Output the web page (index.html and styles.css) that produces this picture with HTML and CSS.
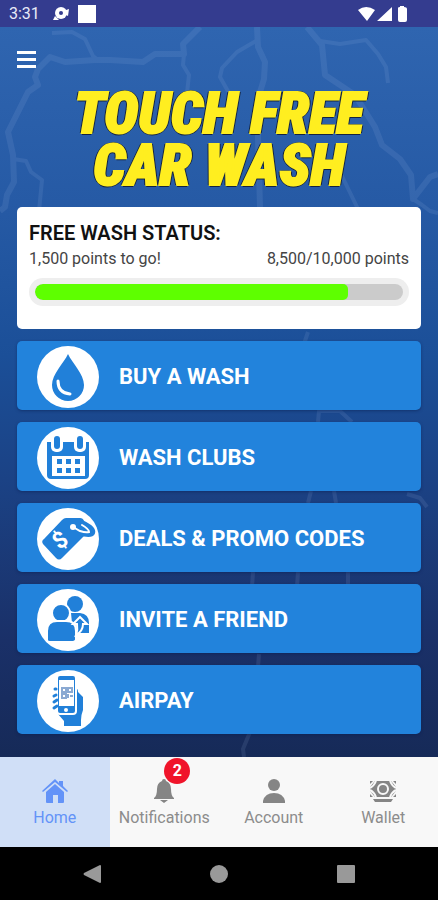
FILE: index.html
```html
<!DOCTYPE html>
<html lang="en">
<head>
<meta charset="utf-8">
<meta name="viewport" content="width=device-width, initial-scale=1">
<title>Touch Free Car Wash</title>
<link rel="stylesheet" href="styles.css">
</head>
<body>
<div class="status-bar">
  <time class="clock">3:31</time>
  <svg class="status-left" width="44" height="20" viewBox="0 0 44 20" aria-hidden="true">
    <circle cx="9" cy="9" r="6"/><path d="M1 16l2-4 4 4zM14 6l3-1-1 7-2-1z"/><circle class="hole" cx="9" cy="9" r="2"/>
    <rect x="26" y="1" width="18" height="18"/>
  </svg>
  <svg class="status-right" width="50" height="18" viewBox="0 0 50 18" aria-hidden="true">
    <path d="M0 5Q8-1 17 5L9 16zM34 2v14H19zM40 3q0-1 2-1V1h4v1q3 0 3 2v11q0 2-2 2h-5q-2 0-2-2z"/>
  </svg>
</div>

<main class="screen">
  <svg class="lightning" viewBox="0 0 438 730" preserveAspectRatio="xMidYMin slice" aria-hidden="true">
    <g class="bolt-wide">
      <path d="M200 0L183 17L184 27L155 27L143 35L110 33L95 33L65 35L50 30L38 42L35 50L38 58L28 65L8 105L13 128L14 155L7 168L5 180L0 184"/>
      <path d="M257 0L258 20L265 35L264 52L257 75L260 180"/>
      <path d="M307 0L322 18L325 48L355 68L375 100L382 118L400 132L411 148L413 172L430 150L438 147"/>
    </g>
    <g class="bolt">
      <path d="M52 6L72 5L85 12L93 29L98 33"/>
      <path d="M184 27L183 38L189 48L187 66"/>
      <path d="M256 14L237 25L222 41L220 50L229 66"/>
      <path d="M320 14L340 17L366 13L378 27L386 40L388 56"/>
      <path d="M13 132L26 134L31 145L42 153L39 184"/>
      <path d="M413 172L422 178L430 184L438 186"/>
      <path d="M340 145L358 182M308 305L303 320M318 395L319 384L340 384L352 395"/>
      <path d="M311 464L308 476M334 464L336 476M298 545L297 560M253 545L252 560M348 545L348 560M259 627L258 640M250 705L243 722L244 730"/>
      <path d="M407 467L420 471L427 480"/>
    </g>
  </svg>

  <header class="top">
    <button class="menu" type="button" aria-label="Open menu"><span></span><span></span><span></span></button>
    <h1 class="logo">TOUCH FREE<br>CAR WASH</h1>
  </header>

  <section class="card">
    <h2>FREE WASH STATUS:</h2>
    <div class="points"><label for="points">1,500 points to go!</label><span>8,500/10,000 points</span></div>
    <progress id="points" max="10000" value="8500"></progress>
  </section>

  <div class="actions">
    <button class="action" type="button">
      <svg viewBox="0 0 62 62" aria-hidden="true"><circle class="disc" cx="31" cy="31" r="31"/>
        <path d="M31 8C27 17 15 28 15 39a16 16 0 0 0 32 0C47 28 35 17 31 8z"/>
        <path class="line w3" d="M21 35Q21 47 33 48"/></svg>
      BUY A WASH
    </button>
    <button class="action" type="button">
      <svg viewBox="0 0 62 62" aria-hidden="true"><circle class="disc" cx="31" cy="31" r="31"/>
        <path d="M10 15H52V48Q52 52 48 52H14Q10 52 10 48z"/>
        <rect class="disc" x="14" y="8" width="12" height="17" rx="5"/><rect class="disc" x="37" y="8" width="12" height="17" rx="5"/>
        <rect x="17" y="9" width="6" height="13" rx="3"/><rect x="40" y="9" width="6" height="13" rx="3"/>
        <rect class="disc" x="15" y="29" width="33" height="20"/>
        <path d="M20 32h5v5h-5zM29 32h5v5h-5zM38 32h5v5h-5zM20 41h5v5h-5zM29 41h5v5h-5zM38 41h5v5h-5z"/></svg>
      WASH CLUBS
    </button>
    <button class="action" type="button">
      <svg viewBox="0 0 62 62" aria-hidden="true"><circle class="disc" cx="31" cy="31" r="31"/>
        <path d="M29 10H43Q46 10 47 13L48 27L25 50Q22 53 19 50L6 36Q4 33 7 31L25 12Q27 10 29 10z"/>
        <path class="loop" d="M45 14Q58 20 56 25Q54 29 42 25"/>
        <circle class="disc" cx="36" cy="19" r="3"/><path class="line w2" d="M36 19L43 23Q49 25 52 24Q52 21 45 17"/>
        <text class="dollar" x="23" y="40" transform="rotate(-36 23 32)">$</text></svg>
      DEALS &amp; PROMO CODES
    </button>
    <button class="action" type="button">
      <svg viewBox="0 0 62 62" aria-hidden="true"><circle class="disc" cx="31" cy="31" r="31"/>
        <circle cx="38" cy="15" r="8"/><path d="M34 24H43Q52 25 52 34V44H36z"/>
        <circle class="ring" cx="24" cy="24" r="9"/>
        <path class="ring" d="M10 51V42Q10 32 20 32H29Q39 32 39 42V51Q38 53 36 53H13Q10 53 10 51z"/>
        <path class="ring" d="M43 28L50 35H46Q46 42 39 46Q41 41 40 35H36z"/></svg>
      INVITE A FRIEND
    </button>
    <button class="action" type="button">
      <svg viewBox="0 0 62 62" aria-hidden="true"><circle class="disc" cx="31" cy="31" r="31"/>
        <path d="M38 18Q41 18 41 22L46 27V40Q44 45 44 50V56H27V51L21 44H35Q39 43 38 38z"/>
        <rect class="ring" x="20" y="5" width="19" height="39" rx="3"/>
        <rect class="disc" x="22" y="10" width="15" height="26"/><circle class="disc" cx="29" cy="40" r="2"/>
        <path class="qr" d="M25 18h4v4h-4zM31 18h4v4h-4zM25 24h4v4h-4zM31 24v4M33 26h3"/>
        <path class="finger" d="M18 19h1M17 26l2-1M17 32l3-2M17 38l3-2"/></svg>
      AIRPAY
    </button>
  </div>
</main>

<nav class="tabs" aria-label="Main">
  <a class="tab active" href="#home" aria-current="page">
    <svg viewBox="0 0 24 24" aria-hidden="true"><path d="M12 0L16 4V2H20V7L25 12L24 13L12 3L0 13L-1 12zM12 5L21 13V23Q21 24 20 24H15V16H10V24H4Q3 24 3 23V13z"/></svg>
    Home
  </a>
  <a class="tab" href="#notifications">
    <span class="icon-wrap">
      <svg viewBox="0 0 24 24" aria-hidden="true"><path d="M12 0Q14 0 14 2Q19 4 19 10Q19 17 22 19V20H2V19Q5 17 5 10Q5 4 10 2Q10 0 12 0zM8 21H16L12 24z"/></svg>
      <span class="badge">2</span>
    </span>
    Notifications
  </a>
  <a class="tab" href="#account">
    <svg viewBox="0 0 24 24" aria-hidden="true"><circle cx="12" cy="6" r="6"/><path d="M1 24V22Q3 14 12 14Q21 14 23 22V24z"/></svg>
    Account
  </a>
  <a class="tab" href="#wallet">
    <svg viewBox="0 0 24 24" aria-hidden="true"><path d="M4 2H20L25 8V12L20 18H4L-1 12V8z"/><path class="cut" d="M5 2Q3 7-1 9M19 2Q21 7 25 9M5 18Q3 13-1 11M19 18Q21 13 25 11"/><path d="M-1 2H2L-1 5zM25 2H22L25 5zM-1 18H2L-1 15zM25 18H22L25 15zM2 20H22L20 23H4z"/><circle class="cut" cx="12" cy="10" r="5"/></svg>
    Wallet
  </a>
</nav>

<div class="system-nav">
  <button type="button" aria-label="Back"><svg viewBox="0 0 18 18" aria-hidden="true"><path d="M17 0Q18 0 18 1V17Q18 18 17 18L1 10Q0 9 1 8z"/></svg></button>
  <button type="button" aria-label="Home screen"><svg viewBox="0 0 18 18" aria-hidden="true"><circle cx="9" cy="9" r="9"/></svg></button>
  <button type="button" aria-label="Recent apps"><svg viewBox="0 0 18 18" aria-hidden="true"><rect width="18" height="18" rx="1"/></svg></button>
</div>
</body>
</html>
```
FILE: styles.css
```css
* { box-sizing: border-box; }

body {
  margin: 0;
  min-height: 100vh;
  display: flex;
  flex-direction: column;
  font-family: Roboto, "Liberation Sans", sans-serif;
  background: #000;
}

button {
  font: inherit;
  border: 0;
  padding: 0;
  background: none;
}

svg { display: block; overflow: visible; }

.status-bar {
  display: flex;
  align-items: center;
  height: 27px;
  padding: 0 30px 0 9px;
  background: #343c8f;
  color: #e8eaf8;
}
.status-bar svg { fill: #fff; }
.status-bar .hole { fill: #343c8f; }
.clock { font-size: 16px; line-height: 28px; }
.status-left { margin-left: 12px; }
.status-right { margin-left: auto; }

.screen {
  position: relative;
  flex: 1;
  padding: 0 17px 22px;
  background: linear-gradient(#2f65b0 0%, #265aa5 24%, #1b4f98 45%, #1b4285 62%, #1a3068 84%, #162a58 100%);
}
.lightning {
  position: absolute;
  inset: 0;
  width: 100%;
  height: 100%;
  overflow: hidden;
  fill: none;
  stroke: #a4bce8;
  stroke-linejoin: round;
  opacity: 0.12;
}
.bolt-wide { stroke-width: 6px; }
.bolt { stroke-width: 4px; }

.top, .card, .actions { position: relative; }

.menu {
  display: grid;
  gap: 4px;
  width: 19px;
  padding-top: 24px;
}
.menu span { height: 3px; background: #fff; }

.logo {
  margin: 19px 0 16px;
  font-family: "Roboto Condensed", Roboto, sans-serif;
  font-size: 58px;
  font-weight: 900;
  font-style: italic;
  line-height: 52px;
  text-align: center;
  color: #ffee20;
  -webkit-text-stroke: 2px #ffee20;
  text-shadow:
    2px 0 #14233f, -2px 0 #14233f, 0 2px #14233f, 0 -1px #14233f,
    1px 1px #14233f, -1px 1px #14233f, 1px -1px #14233f, -1px -1px #14233f;
}

.card {
  padding: 12px;
  height: 122px;
  border-radius: 5px;
  background: #fff;
}
.card h2 {
  margin: 0;
  font-size: 20px;
  font-weight: 600;
  line-height: 28px;
  color: #111;
}
.points {
  display: flex;
  justify-content: space-between;
  font-size: 16px;
  line-height: 24px;
  color: #444;
}
progress {
  appearance: none;
  display: block;
  width: 100%;
  height: 28px;
  margin-top: 7px;
  padding: 6px;
  border: 0;
  border-radius: 14px;
  background: #eee;
}
progress::-webkit-progress-bar { border-radius: 8px; background: #cbcbcb; overflow: hidden; }
progress::-webkit-progress-value { border-radius: 8px 5px 5px 8px; background: #5eff00; }

.actions { display: grid; gap: 12px; margin-top: 12px; }
.action {
  display: flex;
  align-items: center;
  gap: 20px;
  width: 100%;
  height: 69px;
  padding: 2px 0 0 20px;
  border-radius: 5px;
  background: #2283dc;
  color: #fff;
  font-size: 22px;
  font-weight: 700;
  text-align: left;
  box-shadow: 0 1px 3px rgba(10, 30, 80, 0.5);
}
.action svg { flex: none; width: 62px; height: 62px; fill: #2180d9; }
.action .disc { fill: #fff; }
.action .line { fill: none; stroke: #fff; stroke-linecap: round; }
.w3 { stroke-width: 3px; }
.w2 { stroke-width: 2px; }
.loop { stroke: #2180d9; stroke-width: 4px; }
.ring { stroke: #fff; stroke-width: 2px; }
.qr { fill: none; stroke: #8aa9d2; stroke-width: 2px; }
.finger { stroke: #2180d9; stroke-width: 3px; stroke-linecap: round; }
.dollar { fill: #fff; font-size: 23px; font-weight: 700; text-anchor: middle; }

.tabs {
  display: grid;
  grid-template-columns: repeat(4, 1fr);
  height: 90px;
  background: #f8f8f8;
}
.tab {
  display: flex;
  flex-direction: column;
  align-items: center;
  gap: 3px;
  padding-top: 22px;
  font-size: 16px;
  line-height: 24px;
  color: #8c8c8c;
  text-decoration: none;
}
.tab svg { width: 24px; height: 24px; fill: #858585; }
.tab.active { background: #d0dff7; color: #6393f8; }
.tab.active svg { fill: #6393f8; }
.tab .cut { fill: none; stroke: #f8f8f8; stroke-width: 2px; }
.icon-wrap { position: relative; }
.badge {
  position: absolute;
  left: 12px;
  bottom: 19px;
  width: 26px;
  height: 26px;
  border-radius: 50%;
  background: #f0142a;
  color: #fff;
  font-weight: 700;
  line-height: 26px;
  text-align: center;
}

.system-nav {
  display: grid;
  grid-template-columns: repeat(3, 1fr);
  align-items: center;
  height: 53px;
  padding: 0 29px;
  background: #000;
}
.system-nav button { justify-self: center; }
.system-nav svg { width: 18px; height: 18px; fill: #999; }
```
